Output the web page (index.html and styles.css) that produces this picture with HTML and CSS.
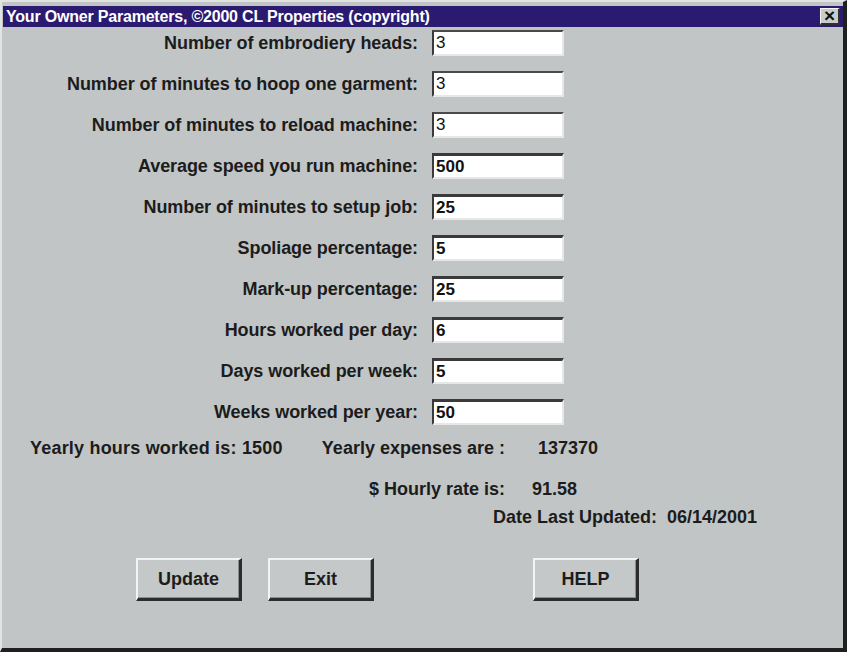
FILE: index.html
```html
<!DOCTYPE html>
<html>
<head>
<meta charset="utf-8">
<link rel="stylesheet" href="styles.css">
</head>
<body>
<div class="window">
  <div class="titlebar">
    <span class="title">Your Owner Parameters, ©2000 CL Properties (copyright)</span>
    <span class="close">×</span>
  </div>
  <div class="form">
    <div class="row"><span class="label">Number of embrodiery heads:</span><span class="field thin">3</span></div>
    <div class="row"><span class="label">Number of minutes to hoop one garment:</span><span class="field thin">3</span></div>
    <div class="row"><span class="label">Number of minutes to reload machine:</span><span class="field thin">3</span></div>
    <div class="row"><span class="label">Average speed you run machine:</span><span class="field">500</span></div>
    <div class="row"><span class="label">Number of minutes to setup job:</span><span class="field">25</span></div>
    <div class="row"><span class="label">Spoliage percentage:</span><span class="field">5</span></div>
    <div class="row"><span class="label">Mark-up percentage:</span><span class="field">25</span></div>
    <div class="row"><span class="label">Hours worked per day:</span><span class="field">6</span></div>
    <div class="row"><span class="label">Days worked per week:</span><span class="field">5</span></div>
    <div class="row"><span class="label">Weeks worked per year:</span><span class="field">50</span></div>
  </div>
  <div class="summary">
    <div class="sline first">
      <div class="sleft"><span class="hrs">Yearly hours worked is: 1500</span><span>Yearly expenses are :</span></div>
      <span class="val v1">137370</span>
    </div>
    <div class="sline second">
      <div class="sleft right"><span>$ Hourly rate is:</span></div>
      <span class="val v2">91.58</span>
    </div>
    <div class="sline third">Date Last Updated:&nbsp; 06/14/2001</div>
  </div>
  <div class="buttons">
    <button class="btn">Update</button>
    <button class="btn exit">Exit</button>
    <button class="btn help">HELP</button>
  </div>
</div>
</body>
</html>
```
FILE: styles.css
```css
html, body {
  margin: 0;
  padding: 0;
  background: #c1c5c5;
}
.window {
  width: 847px;
  height: 652px;
  box-sizing: border-box;
  background: #c1c5c5;
  border-left: 2px solid #e2e4e4;
  border-top: 2px solid #e2e4e4;
  border-right: 4px solid #1e2020;
  border-bottom: 4px solid #1e2020;
  padding: 4px 0 0 1px;
  display: flex;
  flex-direction: column;
  font-family: "Liberation Sans", Arial, sans-serif;
  font-weight: bold;
  color: #1c1c1c;
}
.titlebar {
  height: 21px;
  background: #2b1b70;
  display: flex;
  align-items: center;
  justify-content: space-between;
  padding: 0 3px 0 3px;
}
.title {
  color: #ffffff;
  font-size: 16px;
  font-weight: bold;
  letter-spacing: -0.2px;
}
.close {
  width: 20px;
  height: 17px;
  box-sizing: border-box;
  background: #c8cccc;
  border-top: 1px solid #f4f4f4;
  border-left: 1px solid #f4f4f4;
  border-right: 2px solid #303030;
  border-bottom: 2px solid #303030;
  color: #111;
  font-size: 19px;
  line-height: 13px;
  text-align: center;
  font-weight: bold;
}
.form {
  display: flex;
  flex-direction: column;
  gap: 15px;
  padding-top: 3px;
}
.row {
  display: flex;
  align-items: center;
  gap: 14px;
  height: 26px;
}
.label {
  width: 415px;
  text-align: right;
  font-size: 18px;
  letter-spacing: -0.08px;
  white-space: nowrap;
}
.field {
  width: 132px;
  height: 26px;
  box-sizing: border-box;
  background: #ffffff;
  border-top: 3px solid #3a3a3a;
  border-left: 2px solid #3a3a3a;
  border-right: 2px solid #e6e8e8;
  border-bottom: 2px solid #e6e8e8;
  font-size: 17px;
  line-height: 21px;
  padding-left: 2px;
  color: #111;
}
.field.thin {
  font-weight: normal;
  border-top: 2px solid #4a4a4a;
}
.summary {
  display: flex;
  flex-direction: column;
  font-size: 18px;
  padding-top: 13px;
}
.sline {
  display: flex;
  align-items: center;
  height: 21px;
  white-space: nowrap;
}
.sleft {
  width: 475px;
  padding-left: 27px;
  display: flex;
  justify-content: space-between;
}
.hrs { letter-spacing: 0.2px; }
.sleft.right {
  justify-content: flex-end;
}
.v1 { margin-left: 33px; }
.v2 { margin-left: 27px; }
.second { margin-top: 20px; }
.third { margin-top: 7px; padding-left: 490px; }
.buttons {
  display: flex;
  padding-left: 133px;
  margin-top: 30px;
}
.btn {
  width: 106px;
  height: 43px;
  box-sizing: border-box;
  background: #c4c8c8;
  border-top: 2px solid #f2f4f4;
  border-left: 2px solid #f2f4f4;
  border-right: 3px solid #2c2c2c;
  border-bottom: 3px solid #2c2c2c;
  box-shadow: inset -1px -1px 0 #8a8e8e;
  font-family: "Liberation Sans", Arial, sans-serif;
  font-weight: bold;
  font-size: 18px;
  color: #1c1c1c;
  padding: 0;
}
.exit { margin-left: 26px; }
.help { margin-left: 159px; }
```
